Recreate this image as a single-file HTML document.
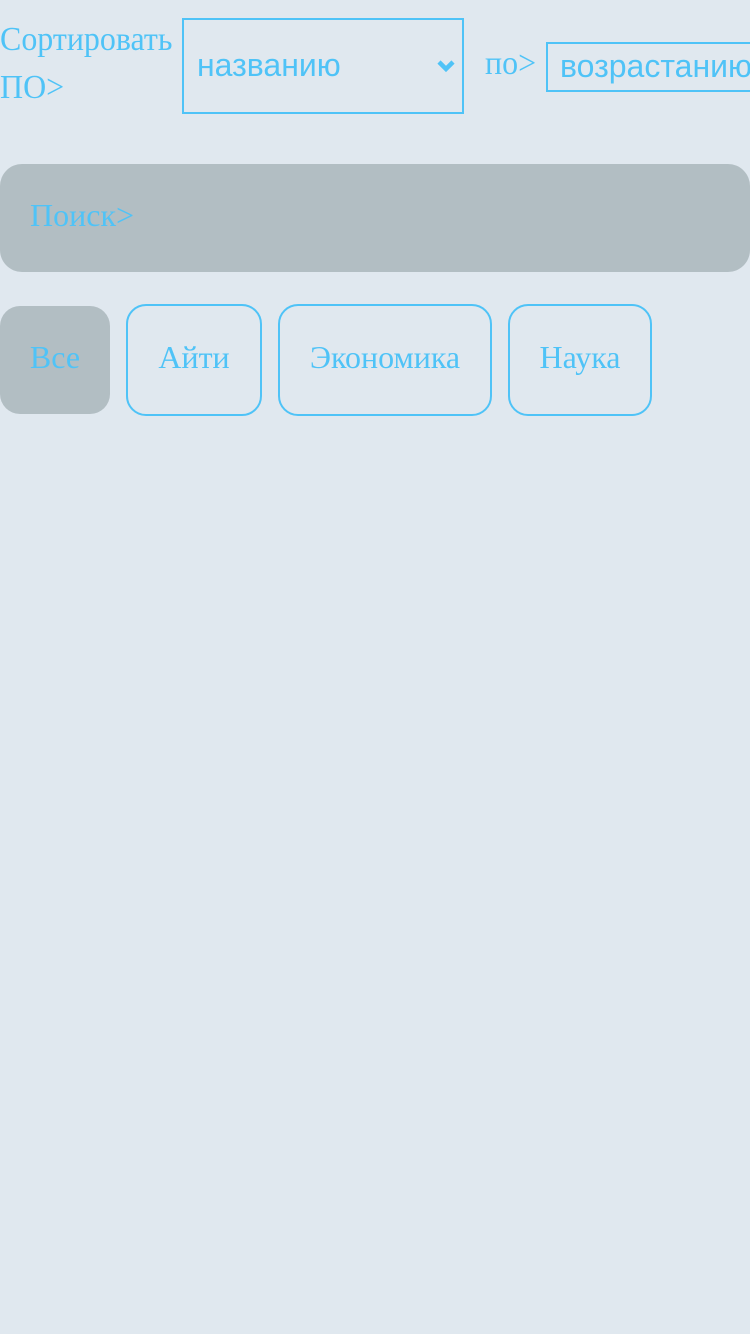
<!DOCTYPE html>
<html><head><meta charset="utf-8"><style>
html,body{margin:0;padding:0;width:750px;height:1334px;background:#e0e8ef;overflow:hidden}
body{position:relative;color:#4fc3f7}
.a{position:absolute;white-space:nowrap}
.serif{font-family:"Liberation Serif",serif}
.sans{font-family:"Liberation Sans",sans-serif}
.cond{transform:scaleX(0.94);transform-origin:left top}
.box{position:absolute;border:2px solid #4fc3f7;box-sizing:border-box}
.chip{position:absolute;top:304px;height:112px;box-sizing:border-box;border:2px solid #4fc3f7;border-radius:20px;font-family:"Liberation Serif",serif;font-size:32px;display:flex;align-items:center;justify-content:center;padding-bottom:6px}
</style></head><body>
<div class="a serif cond" style="left:0;top:20px;font-size:34px;line-height:40px">Сортировать</div>
<div class="a serif cond" style="left:0;top:68px;font-size:34px;line-height:40px">ПО&gt;</div>
<div class="box" style="left:182px;top:18px;width:282px;height:96px"></div>
<div class="a sans" style="left:197px;top:45px;font-size:32px;line-height:40px">названию</div>
<svg class="a" style="left:436px;top:58px" width="20" height="16" viewBox="0 0 20 16"><path d="M3 4 L10 11 L17 4" stroke="#4fc3f7" stroke-width="4.5" fill="none"/></svg>
<div class="a serif cond" style="left:485px;top:44px;font-size:34px;line-height:40px">по&gt;</div>
<div class="box" style="left:546px;top:42px;width:220px;height:50px"></div>
<div class="a sans" style="left:560px;top:46px;font-size:32px;line-height:40px">возрастанию</div>
<div class="a" style="left:0;top:164px;width:750px;height:108px;background:#b2bec3;border-radius:22px"></div>
<div class="a serif" style="left:30px;top:195px;font-size:32px;line-height:40px">Поиск&gt;</div>
<div class="chip" style="left:0;width:110px;background:#b2bec3;border:none;top:306px;height:108px">Все</div>
<div class="chip" style="left:126px;width:136px">Айти</div>
<div class="chip" style="left:278px;width:214px">Экономика</div>
<div class="chip" style="left:508px;width:144px">Наука</div>
</body></html>
